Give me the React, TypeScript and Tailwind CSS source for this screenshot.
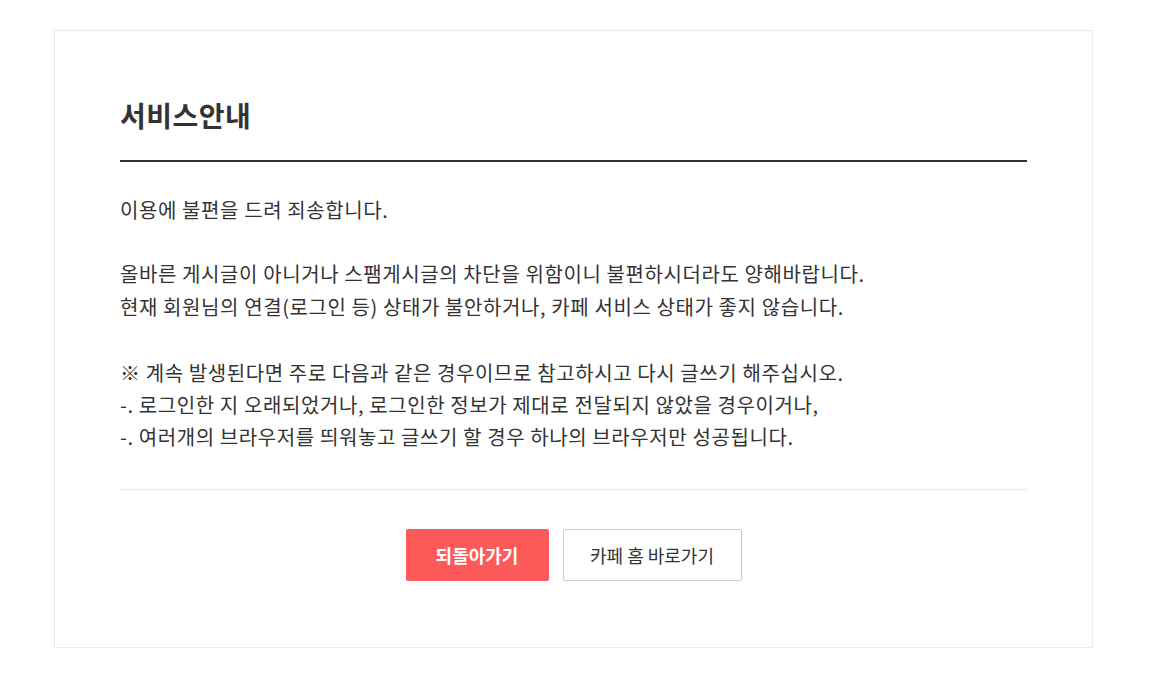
export default function App() {
  return (
    <div className="min-h-screen bg-white pt-[30px] font-['Noto_Sans_CJK_KR','Noto_Sans',sans-serif] text-[#333]">
      <div className="ml-[54px] w-[1039px] border border-[#ebebeb] px-[65px] pt-[64px] pb-[66px]">
        {/* Title */}
        <h2 className="border-b-2 border-[#333] pb-[25px] text-[28px] font-bold leading-[40px] tracking-[0.5px] text-[#333]">
          서비스안내
        </h2>

        {/* Body */}
        <div className="mt-[32px] text-[20px] tracking-[0.6px] text-[#333]">
          <p className="leading-[32px]">이용에 불편을 드려 죄송합니다.</p>
          <p className="mt-[31px] leading-[33px]">
            올바른 게시글이 아니거나 스팸게시글의 차단을 위함이니 불편하시더라도 양해바랍니다.
            <br />
            현재 회원님의 연결(로그인 등) 상태가 불안하거나, 카페 서비스 상태가 좋지 않습니다.
          </p>
          <p className="mt-[34px] leading-[32px]">
            ※ 계속 발생된다면 주로 다음과 같은 경우이므로 참고하시고 다시 글쓰기 해주십시오.
            <br />
            -. 로그인한 지 오래되었거나, 로그인한 정보가 제대로 전달되지 않았을 경우이거나,
            <br />
            -. 여러개의 브라우저를 띄워놓고 글쓰기 할 경우 하나의 브라우저만 성공됩니다.
          </p>
        </div>

        {/* Buttons */}
        <div className="mt-[36px] flex justify-center gap-[14px] border-t border-[#ebebeb] pt-[39px]">
          <button className="h-[52px] w-[143px] rounded-[2px] bg-[#ff5a5a] text-[18px] font-bold text-white">
            되돌아가기
          </button>
          <button className="h-[52px] w-[179px] rounded-[2px] border border-[#ccc] bg-white text-[18px] text-[#333]">
            카페 홈 바로가기
          </button>
        </div>
      </div>
    </div>
  );
}
